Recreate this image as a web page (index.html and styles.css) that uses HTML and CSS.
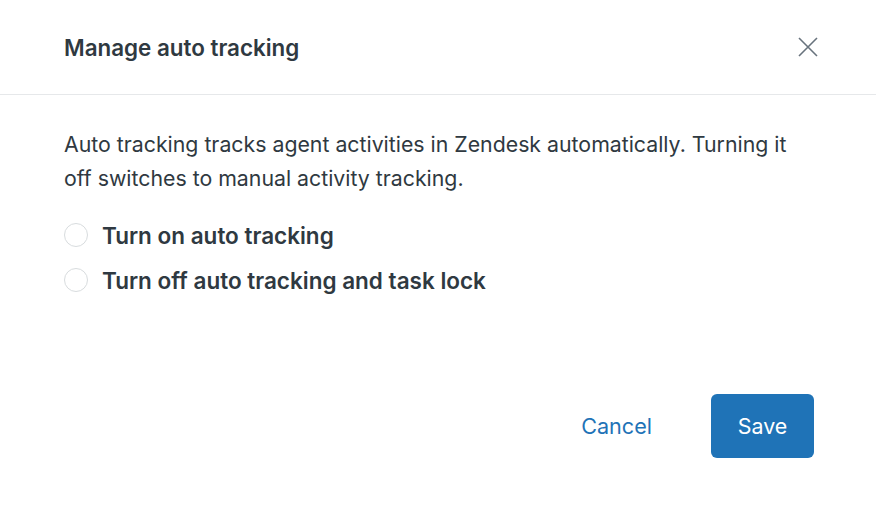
FILE: index.html
```html
<!DOCTYPE html>
<html lang="en">
<head>
    <meta charset="UTF-8">
    <meta name="viewport" content="width=device-width, initial-scale=1.0">
    <title>Manage auto tracking</title>
    <link rel="stylesheet" href="styles.css">
</head>
<body>
    <div class="modal">
        <header class="modal-header">
            <h2>Manage auto tracking</h2>
            <button class="close" aria-label="Close">
                <svg width="20" height="20" viewBox="0 0 20 20">
                    <path d="M1 1 L19 19 M19 1 L1 19" stroke="#68737d" stroke-width="1.6" fill="none"/>
                </svg>
            </button>
        </header>

        <!-- Body -->
        <div class="modal-body">
            <p>Auto tracking tracks agent activities in Zendesk automatically. Turning it off switches to manual activity tracking.</p>
            <label class="radio">
                <span class="dot"></span>
                Turn on auto tracking
            </label>
            <label class="radio">
                <span class="dot"></span>
                Turn off auto tracking and task lock
            </label>
        </div>

        <footer class="modal-footer">
            <button class="btn-link">Cancel</button>
            <button class="btn-primary">Save</button>
        </footer>
    </div>
</body>
</html>
```

FILE: styles.css
```css
body {
    margin: 0;
    padding: 0;
    background-color: #fff;
    font-family: Inter, 'Noto Sans', sans-serif;
    color: #2f3941;
}
.modal {
    height: 100vh;
    display: flex;
    flex-direction: column;
    background-color: #fff;
}
.modal-header {
    height: 94px;
    display: flex;
    align-items: center;
    justify-content: space-between;
    padding: 0 58px 0 64px;
    border-bottom: 1px solid #e6e8ea;
}
.modal-header h2 {
    margin: 0;
    font-size: 22.4px;
    font-weight: 600;
}
.close {
    border: none;
    background: none;
    padding: 0;
    width: 20px;
    height: 20px;
    display: flex;
}
.modal-body {
    padding: 32px 62px 0 64px;
}
.modal-body p {
    margin: 0 0 23px;
    font-size: 21.3px;
    line-height: 34px;
}
.radio {
    display: flex;
    align-items: center;
    gap: 14px;
    height: 34px;
    margin-bottom: 11px;
    font-size: 22.5px;
    font-weight: 600;
}
.dot {
    width: 24px;
    height: 24px;
    border: 1.5px solid #d8dcde;
    border-radius: 50%;
    box-sizing: border-box;
}
.modal-footer {
    margin-top: auto;
    display: flex;
    align-items: center;
    justify-content: flex-end;
    gap: 59px;
    padding: 0 62px 48px 0;
}
.btn-link {
    border: none;
    background: none;
    padding: 0;
    font-family: inherit;
    font-size: 21.6px;
    color: #1f73b7;
}
.btn-primary {
    width: 103px;
    height: 64px;
    border: none;
    border-radius: 6px;
    background-color: #1f73b7;
    color: #fff;
    font-family: inherit;
    font-size: 21.4px;
}
```
